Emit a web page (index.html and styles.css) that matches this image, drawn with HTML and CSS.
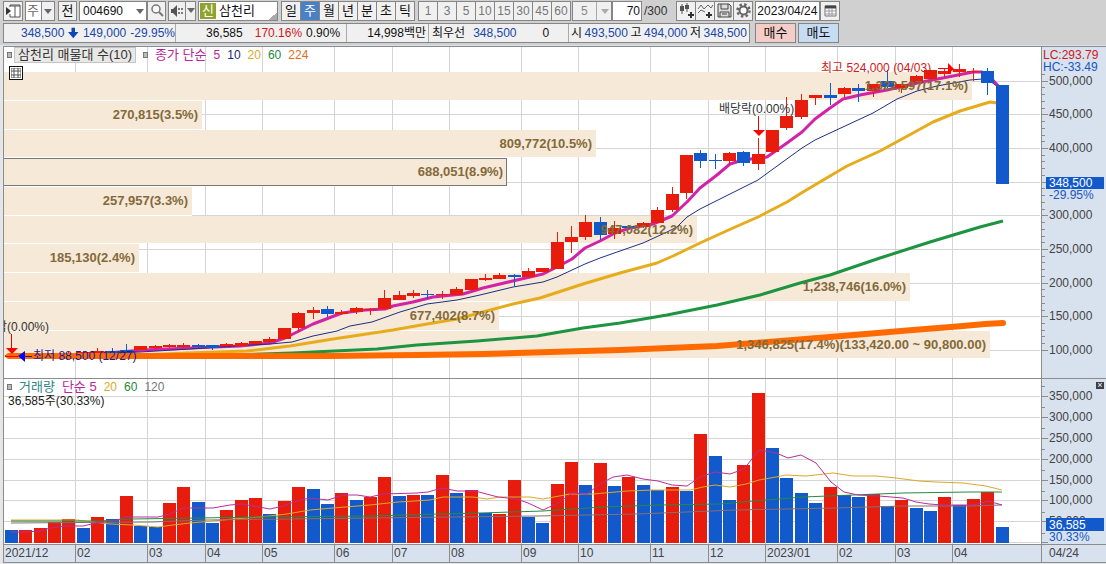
FILE: index.html
```html
<!DOCTYPE html>
<html lang="ko">
<head>
<meta charset="utf-8">
<title>삼천리 주봉 차트</title>
<link rel="stylesheet" href="styles.css">
</head>
<body>
<header class="toolbar">
  <button class="btn icon" aria-label="패널 열기"><svg width="17" height="15" viewBox="0 0 17 15"><path d="M5 4V2H15V14H5V11" fill="#fff" stroke="#555"/><path d="M5 3H15M10 3V14" stroke="#555"/><path d="M1 4L6 8L1 12Z" fill="#333"/></svg></button>
  <span class="combo period"><select aria-label="주기"><option>주</option></select><i class="arrow"></i></span>
  <button class="btn all">전</button>
  <div class="group">
    <span class="combo code"><input type="text" value="004690" aria-label="종목코드"><i class="arrow"></i></span>
    <button class="btn icon search" aria-label="검색"><svg width="14" height="14" viewBox="0 0 14 14"><circle cx="6" cy="5" r="4" fill="#f8f8f8" stroke="#777" stroke-width="1.5"/><path d="M9 8L13 12" stroke="#777" stroke-width="2"/></svg></button>
  </div>
  <div class="group">
    <button class="btn icon sound" aria-label="소리"><svg width="14" height="14" viewBox="0 0 14 14"><path d="M1 5H3L7 1V13L3 9H1Z" fill="#555"/><path d="M9 4V6M9 8V10M12 4V6M12 8V10" stroke="#555" stroke-width="1.5"/></svg></button>
    <button class="btn drop" aria-label="소리 메뉴"><i class="arrow"></i></button>
  </div>
  <div class="stock"><span class="credit">신</span><span>삼천리</span></div>
  <nav class="group units">
    <button class="btn">일</button><button class="btn active">주</button><button class="btn">월</button><button class="btn">년</button><button class="btn">분</button><button class="btn">초</button><button class="btn">틱</button>
  </nav>
  <div class="group minutes">
    <button class="btn">1</button><button class="btn">3</button><button class="btn">5</button><button class="btn">10</button><button class="btn">15</button><button class="btn">30</button><button class="btn">45</button><button class="btn">60</button>
  </div>
  <div class="group count">
    <span class="combo tick"><select aria-label="분 단위"><option>5</option></select><i class="arrow"></i></span>
    <input class="bars" type="text" value="70" aria-label="봉 개수"><span class="total">/300</span>
  </div>
  <div class="group tools">
    <button class="btn icon" aria-label="차트 추가"><svg width="17" height="17" viewBox="0 0 17 17"><path d="M4 2V12M9 1V10" stroke="#555"/><path d="M2 4H6V9H2ZM7 3H11V7H7Z" fill="#555"/><path d="M13 10V16M10 13H16" stroke="#333" stroke-width="2"/></svg></button>
    <button class="btn icon" aria-label="지표 추가"><svg width="17" height="17" viewBox="0 0 17 17"><path d="M1 7L4 3L7 7L11 3L14 6L16 3M1 11L4 8L8 10" fill="none" stroke="#666"/><path d="M12 10V16M9 13H15" stroke="#333" stroke-width="2"/></svg></button>
    <button class="btn icon" aria-label="저장"><svg width="17" height="17" viewBox="0 0 17 17"><path d="M2 2H13L15 4V15H2Z" fill="#ddd" stroke="#444"/><path d="M5 2V7H12V2M4 15V10H13V15M6 12H11" fill="none" stroke="#444"/></svg></button>
    <button class="btn icon" aria-label="설정"><svg width="17" height="17" viewBox="0 0 17 17"><circle cx="8.500" cy="8.500" r="6" fill="none" stroke="#666" stroke-width="2.500" stroke-dasharray="2.400 2.300"/><circle cx="8.500" cy="8.500" r="4" fill="#fff" stroke="#666" stroke-width="2"/></svg></button>
  </div>
  <div class="group">
    <input class="date" type="text" value="2023/04/24" aria-label="날짜">
    <button class="btn icon" aria-label="달력"><svg width="15" height="15" viewBox="0 0 15 15"><path d="M2 3H13V13H2Z" fill="#fff" stroke="#777"/><path d="M2 4H13" stroke="#444" stroke-width="3"/><path d="M2 8H13M2 11H13M6 5V13M9 5V13" stroke="#999"/></svg></button>
  </div>
</header>

<section class="quote">
  <div class="quote-box">
    <div class="cell now"><span class="down">348,500</span><svg width="12" height="12" viewBox="0 0 12 12"><path d="M4 0H8V5H12L6 12L0 5H4Z" fill="#1146b8"/></svg><span class="down">149,000</span><span class="down">-29.95%</span></div>
    <div class="cell vol"><span>36,585</span><span class="up">170.16%</span><span>0.90%</span></div>
    <div class="cell amount"><span>14,998백만</span></div>
    <div class="cell best"><span>최우선</span><span class="down">348,500</span><span class="zero">0</span></div>
    <div class="cell ohl"><span>시</span><span class="down">493,500</span><span>고</span><span class="down">494,000</span><span>저</span><span class="down">348,500</span></div>
  </div>
  <button class="trade buy">매수</button>
  <button class="trade sell">매도</button>
</section>

<main class="chart">
  <svg class="plot" id="plot" viewBox="0 45 1106 519" role="img" aria-label="주가와 거래량 차트"></svg>
  <div class="legend price-legend">
    <i class="mark"></i><span class="tag">삼천리 매물대 수(10)</span><i class="mark"></i>
    <span class="m5 ko">종가 단순</span><span class="m5">5</span><span class="m10">10</span><span class="m20">20</span><span class="m60">60</span><span class="m224">224</span>
  </div>
  <button class="grid-btn" aria-label="표 보기"><svg width="10" height="10" viewBox="0 0 10 10"><path d="M0 0H10V10H0ZM0 3H10M0 7H10M3 0V10M7 0V10" fill="none" stroke="#555"/></svg></button>
  <div class="legend volume-legend">
    <i class="mark"></i><span class="name ko">거래량</span><span class="m5 ko">단순 5</span><span class="m20">20</span><span class="m60">60</span><span class="m120">120</span>
  </div>
  <div class="volume-now">36,585주(30.33%)</div>
  <button class="close" aria-label="닫기">×</button>
</main>
<script src="chart.js"></script>
</body>
</html>
```
FILE: styles.css
```css
* { box-sizing: border-box; }
body {
  margin: 0;
  background: #d0d0d0;
  font: 12px/16px "Liberation Sans", "Noto Sans CJK KR", sans-serif;
  color: #111;
}
button, input, select { font: inherit; color: inherit; margin: 0; }
.toolbar { display: flex; align-items: center; gap: 3px; height: 21px; padding-left: 3px; }
.group { display: flex; }
.btn {
  display: flex; align-items: center; justify-content: center;
  height: 20px; width: 20px; padding: 0; margin-right: -1px;
  border: 1px solid #858585; background: #f0f0f0;
}
.btn.active { background: #4a80c4; color: #fff; }
.units, .all, .stock, .period { font-size: 13px; }
.combo { position: relative; display: flex; height: 20px; border: 1px solid #858585; background: #fff; }
.combo select, .combo input {
  appearance: none; border: 0; border-radius: 0; background: #fff; width: 100%; padding: 0 3px; outline: 0;
}
.arrow { width: 0; height: 0; border: 4px solid transparent; border-top: 5px solid #666; border-bottom: 0; }
.combo .arrow { position: absolute; right: 2px; top: 7px; pointer-events: none; }
.period { width: 30px; color: #666; }
.period select { background: linear-gradient(to right, #fff 15px, #858585 15px, #858585 16px, #f0f0f0 16px); padding: 0 1px; }
.all { width: 19px; }
.code { width: 68px; }
.search { width: 19px; }
.sound { width: 18px; }
.drop { width: 11px; }
.stock {
  display: flex; align-items: center; gap: 3px; height: 20px; width: 80px; padding-left: 1px;
  border: 1px solid #858585;
  background: linear-gradient(135deg, transparent 50%, #aaa 50%) right bottom / 8px 8px no-repeat, #fff;
}
.credit { width: 16px; height: 16px; background: #8fa32e; color: #fff; text-align: center; }
.minutes { color: #777; margin-left: 1px; }
.tick { width: 40px; color: #888; }
.tick select { padding: 0 8px; background: linear-gradient(to right, #f0f0f0 23px, #aaa 23px, #aaa 24px, #f0f0f0 24px); }
.tick .arrow { border-top-color: #aaa; }
.count { align-items: center; margin-left: -1px; }
.bars { width: 30px; height: 20px; border: 1px solid #858585; padding: 0 1px; text-align: right; }
.total { padding-left: 2px; color: #333; }
.tools { margin-left: 6px; }
.date { width: 65px; height: 20px; border: 1px solid #858585; padding: 0 1px; }

.quote { display: flex; gap: 2px; padding: 2px 0 2px 3px; }
.quote-box { display: flex; height: 20px; border: 1px solid #858585; background: #f0f0f0; margin-right: 3px; }
.cell { display: flex; align-items: center; border-right: 1px solid #aaa; }
.cell:last-child { border-right: 0; }
.now { width: 172px; padding-left: 17px; gap: 4px; }
.vol { width: 171px; padding-left: 30px; gap: 12px; }
.vol span:last-child { margin-left: -8px; }
.amount { width: 82px; padding-right: 2px; justify-content: flex-end; }
.best { width: 140px; padding-left: 3px; gap: 8px; }
.zero { padding-left: 18px; }
.ohl { width: 180px; padding: 0 2px; justify-content: space-between; }
.down { color: #1846a8; }
.up { color: #d01818; }
.trade { width: 41px; height: 20px; padding: 0; border: 1px solid #858585; font-size: 13px; line-height: 16px; }
.buy { background: #f5cdc8; }
.sell { background: #c5dcf2; }

.chart { position: relative; }
.plot { display: block; width: 100%; height: auto; font-size: 12px; }
.plot .axis-text { fill: #444; }
.plot .profile-text { fill: #84693b; font-weight: bold; font-size: 13px; text-anchor: end; }
.plot .last-text { fill: #fff; }
.plot .blue-text { fill: #1557c5; }
.plot .red-text { fill: #d01818; }
.plot .low-text { fill: #1c1c9a; }
.plot .note { fill: #333; }
.legend { position: absolute; display: flex; align-items: center; left: 7px; height: 16px; gap: 7px; }
.price-legend { top: 2px; }
.volume-legend { top: 334px; }
.ko { font-size: 13px; }
.mark { width: 5px; height: 6px; border: 1px solid #777; background: #bbb; }
.tag { height: 16px; margin-left: -5px; padding: 0 3px; background: #e8e8e6; border: 1px solid #c4c4c4; font-size: 13px; line-height: 14px; color: #333; }
.m5 { color: #b8259c; }
.m10 { color: #14287e; }
.m20 { color: #d9ab28; }
.m60 { color: #1a8a3c; }
.m224 { color: #e07020; }
.m120 { color: #777; }
.name { color: #2b8585; }
.volume-now { position: absolute; left: 8px; top: 348px; color: #222; }
.grid-btn { position: absolute; left: 9px; top: 21px; width: 14px; height: 14px; padding: 0; border: 1px solid #111; background: #fff; display: flex; align-items: center; justify-content: center; }
.close { position: absolute; right: 2px; top: 337px; width: 8px; height: 7px; padding: 0; border: 0; background: #3a3f46; color: #fff; font-size: 9px; line-height: 7px; }
```
FILE: chart.js
```js
const out = [];
const rect = (x, y, w, h, fill, extra = '') => out.push(`<rect x="${x}" y="${y}" width="${w}" height="${h}" fill="${fill}" ${extra}/>`);
const hline = (x1, x2, y, c = '#d4d4d4') => rect(x1, y, x2 - x1, 1, c);
const vline = (x, y1, y2, c = '#d4d4d4') => rect(x, y1, 1, y2 - y1, c);
const text = (x, y, s, cls, extra = '') => out.push(`<text x="${x}" y="${y}" class="${cls}" ${extra}>${s}</text>`);
const path = (pts, c, w, cap = 'butt') => out.push(`<polyline points="${pts}" fill="none" stroke="${c}" stroke-width="${w}" stroke-linejoin="round" stroke-linecap="${cap}"/>`);
const RED = '#e81c0c', BLUE = '#125acb', LINE = '#8c8c8c';
const barX = i => Math.round(5 + 14.36 * i);

out.push('<defs><clipPath id="area"><rect x="4" y="47" width="1037" height="515"/></clipPath></defs>');
rect(0, 45, 1106, 519, '#d8e1ee');
rect(0, 45, 3, 519, '#e6e6e6');
rect(4, 47, 1037, 497, '#fff');

const months = [[75, '02'], [147, '03'], [205, '04'], [262, '05'], [334, '06'], [392, '07'], [449, '08'], [521, '09'],
  [578, '10'], [650, '11'], [708, '12'], [765, '2023/01'], [837, '02'], [895, '03'], [952, '04']];
const priceRows = [[81, '500,000'], [114, '450,000'], [148, '400,000'], [182, ''], [215, '300,000'], [249, '250,000'],
  [283, '200,000'], [316, '150,000'], [350, '100,000']];
const volumeRows = [[396, '350,000'], [417, '300,000'], [438, '250,000'], [459, '200,000'], [480, '150,000'],
  [500, '100,000'], [521, '50,000'], [542, '']];
months.forEach(m => vline(m[0], 47, 544));
priceRows.concat(volumeRows).forEach(r => hline(4, 1040, r[0]));

// Volume-at-price bands: top, bottom, right edge, label
const bands = [[72, 100, 972, '1,322,597(17.1%)'], [101, 129, 202, '270,815(3.5%)'], [130, 157, 596, '809,772(10.5%)'],
  [158, 186, 507, '688,051(8.9%)'], [187, 215, 192, '257,957(3.3%)'], [216, 243, 697, '947,082(12.2%)'],
  [244, 272, 139, '185,130(2.4%)'], [273, 301, 910, '1,238,746(16.0%)'], [302, 330, 499, '677,402(8.7%)'],
  [331, 358, 990, '1,346,825(17.4%)(133,420.00 ~ 90,800.00)']];
bands.forEach((b, i) => {
  rect(4, b[0], b[2] - 4, b[1] - b[0], '#f6e9d7');
  if (i < 9) hline(4, Math.min(b[2], bands[i + 1][2]), b[1], '#fff');
  if (i === 3) {
    hline(4, b[2], b[0], '#777'); hline(4, b[2], b[1] - 1, '#777'); vline(b[2] - 1, b[0], b[1], '#777');
  }
});

// Candles: body top, body bottom, wick top, wick bottom, rising
const candles = [
  [355,357,353,358,1],[355,357,354,357,1],[355,357,354,357,1],[354,356,353,357,1],[353,355,352,356,1],[352,354,351,355,1],
  [351,353,348,353,1],[351,353,348,353,0],[350,352,344,353,0],[346,350,346,350,1],[346,348,345,349,1],[345,347,344,348,1],
  [345,347,343,348,1],[345,347,344,348,0],[345,348,345,350,0],[344,346,343,347,1],[343,346,342,346,1],[341,344,341,344,1],
  [339,342,337,343,1],[328,339,328,339,1],[313,328,312,332,1],[310,313,307,319,1],[309,314,306,317,0],[312,314,310,315,1],
  [308,312,307,314,1],[309,310,308,315,1],[298,309,290,309,1],[295,300,291,300,1],[293,296,290,298,1],[294,295,290,299,0],
  [294,295,291,299,1],[289,295,287,295,1],[279,290,279,290,1],[278,280,274,281,1],[275,279,273,279,1],[275,277,274,286,0],
  [271,277,268,277,1],[268,272,268,272,1],[242,269,232,269,1],[237,242,226,253,1],[222,237,215,240,1],[222,235,217,240,0],
  [228,234,221,239,1],[226,228,225,229,0],[223,227,222,228,1],[210,223,207,223,1],[194,210,187,212,1],[155,193,155,199,1],
  [153,161,150,168,0],[160,161,154,169,0],[153,161,152,165,1],[152,163,151,166,0],[154,164,138,170,1],[130,152,130,154,1],
  [116,128,97,130,1],[100,117,94,119,1],[95,98,95,105,1],[95,98,83,105,0],[88,94,87,97,1],[88,91,84,102,0],
  [84,91,84,97,1],[81,87,70,88,0],[84,88,84,93,1],[76,83,75,83,1],[70,79,70,79,1],[71,74,68,77,1],
  [69,72,64,77,1],[71,72,68,81,1],[71,83,68,95,0],[85,184,85,184,0]];
path('11,356 76,355 120,352 143,350 190,348 240,346 270,343 285,338 299,331 313,324 342,313 365,310 385,309 393,306 413,302 433,297 463,294 483,288 517,280 543,274 557,267 572,259 585,248 600,241 615,233 630,228 653,224 672,216 687,202 700,188 717,175 730,164 743,160 767,157 787,143 802,132 815,119 830,108 843,99 860,95 887,90 913,84 927,81 953,76 973,72 982,72 990,77 1002,90', '#d222a8', 3);
path('11,356 140,352 190,349 250,345 270,344 292,342 313,336 337,331 350,326 372,322 400,312 427,304 457,300 480,295 513,287 543,282 557,277 585,264 600,258 620,251 643,243 667,232 677,227 687,217 700,209 730,194 758,180 773,169 802,148 815,140 830,133 858,120 873,113 897,99 917,91 937,86 970,80 982,79 990,81 1002,90', '#1c2f86', 1);
path('11,356 140,355 187,353 247,351 290,346 333,339 360,335 393,330 427,324 457,319 483,312 513,304 540,298 583,284 620,273 657,263 673,256 700,243 733,228 758,217 787,202 803,192 830,176 847,166 880,151 913,133 933,122 960,111 980,105 990,102 997,103', '#e6ac1c', 3);
path('230,355 292,353 377,349 417,345 477,341 537,336 583,328 620,323 667,315 717,305 760,295 800,283 830,275 880,258 930,242 980,227 1003,221', '#1c9440', 3);
candles.forEach((c, i) => {
  const x = barX(i), color = c[4] ? RED : BLUE;
  vline(x + 6, c[2], c[3], color);
  rect(x, c[0], 13, c[1] - c[0], color);
});
path('9,356 330,356 417,355 483,354 550,352 620,350 717,346 830,337 913,330 963,326 985,324 1003,323', '#ff6a00', 6, 'round');

bands.forEach((b, i) => text(b[2] - 4, b[0] + 18, b[3], 'profile-text'));

// Annotations
out.push('<g clip-path="url(#area)">');
text(49, 331, '배당락(0.00%)', 'note', 'text-anchor="end"');
out.push('</g>');
text(719, 113, '배당락(0.00%)', 'note');
[[11, 334, 348], [758, 116, 130]].forEach(a => {
  vline(a[0], a[1], a[2], '#e00');
  out.push(`<path d="M${a[0] - 5} ${a[2]}h12l-6 6z" fill="#f00"/>`);
});
hline(6, 18, 356, '#e00');
text(821, 72, '최고 524,000 (04/03)', 'red-text');
hline(938, 949, 68, '#e00');
out.push('<path d="M948 63V74L954 69z" fill="#f00"/>');
out.push('<path d="M25 351V362L18 356z" fill="#00f"/>');
hline(24, 32, 356, '#1c1c9a');
text(33, 360, '최저 88,500 (12/27)', 'low-text');

// Volume
const volumes = '530B530R528R522R519R528B517R519B496R526B527B503R487R502B523B510R500R498R514B501R487R489B504B493R500B497R477R496B495R495B475R493B490R513B514R480R517B523B484R462R485B463R486B477R485B490B487R491B434R456B500B465R393R448B478B493B503B487R495B497B494R506B500R508B511B497R505B499R492R527B';
volumes.match(/\d+[RB]/g).forEach((v, i) => {
  const y = parseInt(v, 10);
  rect(barX(i), y, 13, 543 - y, v.endsWith('R') ? RED : BLUE);
});
path('11,520 77,520 110,524 133,525 158,527 173,525 190,523 213,521 233,519 260,517 287,514 310,510 333,508 370,505 398,502 430,500 443,497 473,497 487,499 500,497 530,497 543,499 570,494 593,494 627,491 653,490 690,490 703,487 715,485 730,487 746,484 759,480 776,477 786,475 806,476 833,473 853,476 876,476 896,478 919,481 936,482 963,483 986,486 1002,490', '#dba928', 1);
path('11,521 100,521 133,519 260,517 370,516 437,514 480,513 543,511 603,507 660,505 720,504 766,500 803,497 853,495 903,493 969,492 1002,492', '#268a42', 1);
path('11,523 150,522 207,520 370,518 537,516 637,514 736,510 836,508 903,506 969,506 1002,505', '#857070', 1);
path('11,532 25,532 40,531 50,528 67,526 83,526 100,522 115,521 125,517 158,517 170,514 183,508 213,508 230,505 242,504 270,509 283,506 297,501 310,498 328,500 343,495 357,495 370,497 383,494 417,493 428,492 442,488 457,491 475,491 498,497 517,499 528,503 543,510 558,503 572,493 587,494 600,484 613,477 627,475 643,479 658,481 672,485 687,486 700,477 715,472 730,474 744,469 759,450 776,453 788,458 801,455 816,463 831,482 844,492 858,495 879,496 903,498 916,502 929,504 943,505 973,505 988,501 1002,505', '#b82e9c', 1);

// Frame and axes
hline(3, 1106, 46, LINE);
vline(3, 46, 562, LINE);
rect(4, 544, 1102, 18, '#d8e1ee');
hline(3, 1106, 378, LINE);
hline(3, 1106, 544, LINE);
hline(3, 1106, 562, LINE);
rect(0, 563, 1106, 1, '#e6e6e6');
vline(1041, 46, 562, LINE);
priceRows.forEach(([y, label]) => { hline(1042, 1048, y, LINE); text(1049, y + 4, label, 'axis-text'); });
for (let y = 74; y < 345; y += 6.73) hline(1042, 1045, Math.round(y), LINE);
volumeRows.forEach(([y, label]) => { hline(1042, 1048, y, LINE); text(1049, y + 4, label, 'axis-text'); });
for (let y = 386; y < 540; y += 21) hline(1042, 1045, y, LINE);
rect(1046, 177, 58, 12, BLUE);
text(1049, 187, '348,500', 'last-text');
text(1049, 199, '-29.95%', 'blue-text');
rect(1046, 518, 58, 13, BLUE);
text(1049, 529, '36,585', 'last-text');
text(1049, 541, '30.33%', 'blue-text');
text(1043, 59, 'LC:293.79', 'red-text');
text(1043, 71, 'HC:-33.49', 'blue-text');
text(5, 557, '2021/12', 'axis-text');
months.forEach(([x, label]) => { vline(x, 544, 562, LINE); text(x + 2, 557, label, 'axis-text'); });
text(1049, 557, '04/24', 'axis-text');

document.getElementById('plot').innerHTML = out.join('');
```
